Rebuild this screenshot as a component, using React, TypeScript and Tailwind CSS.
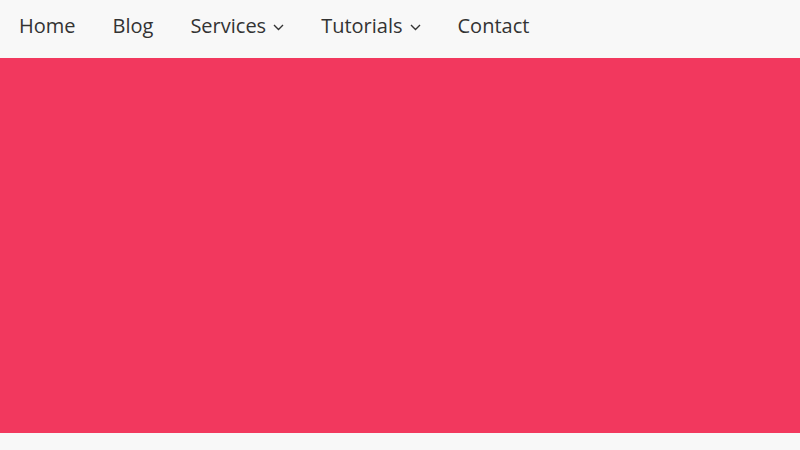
const LINKS = [
  { label: "Home" },
  { label: "Blog" },
  { label: "Services", dropdown: true },
  { label: "Tutorials", dropdown: true },
  { label: "Contact" },
];

function Caret() {
  return (
    <svg width="11" height="7" viewBox="0 0 11 7" fill="none" className="mt-[3px]">
      <polyline points="1,1 5.5,5.5 10,1" stroke="currentColor" strokeWidth="1.4" />
    </svg>
  );
}

export default function App() {
  return (
    <div className="min-h-[450px] bg-[#f8f8f8] font-['Open_Sans',sans-serif]">
      <nav className="h-[58px] flex items-center pb-[6px]">
        <ul className="flex items-center pl-[0.5px]">
          {LINKS.map((link) => (
            <li key={link.label}>
              <a href="#" className="flex items-center gap-[7px] px-[18.5px] text-[20px] text-[#333333]">
                {link.label}
                {link.dropdown && <Caret />}
              </a>
            </li>
          ))}
        </ul>
      </nav>
      <section className="h-[375px] bg-[#f2385e]" />
    </div>
  );
}
